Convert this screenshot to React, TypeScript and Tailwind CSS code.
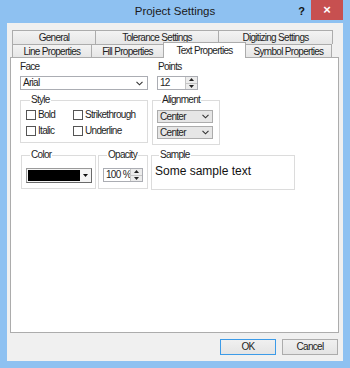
const ui = "font-['Liberation_Sans',Arial,sans-serif] text-[10px] tracking-[-0.7px] text-[#1e1e1e]"

function Chevron() {
  return (
    <svg width="7" height="5" viewBox="0 0 7 5">
      <path d="M0.5 0.8L3.5 3.8L6.5 0.8" stroke="#333" strokeWidth="1.1" fill="none" />
    </svg>
  )
}

function SpinButtons() {
  return (
    <div className="flex w-[12px] shrink-0 flex-col border-l border-[#c5c5c5]">
      <div className="flex flex-1 items-center justify-center border-b border-[#c5c5c5] bg-[#ececec]">
        <svg width="5" height="3" viewBox="0 0 5 3">
          <path d="M0 3L2.5 0L5 3Z" fill="#222" />
        </svg>
      </div>
      <div className="flex flex-1 items-center justify-center bg-[#ececec]">
        <svg width="5" height="3" viewBox="0 0 5 3">
          <path d="M0 0L2.5 3L5 0Z" fill="#222" />
        </svg>
      </div>
    </div>
  )
}

function Group({ label, className, children }: { label: string; className: string; children: React.ReactNode }) {
  return (
    <fieldset className={`border border-[#dcdcdc] ${className}`}>
      <legend className="ml-[4px] px-[1px] leading-[12px]">{label}</legend>
      {children}
    </fieldset>
  )
}

function Check({ label }: { label: string }) {
  return (
    <div className="flex h-[10px] items-center gap-[2px]">
      <div className="h-[10px] w-[10px] border border-[#555] bg-white" />
      <span className="leading-[12px]">{label}</span>
    </div>
  )
}

function Combo({ text }: { text: string }) {
  return (
    <div className="flex h-[13px] w-[56px] items-center justify-between border border-[#acacac] bg-[#e6e6e6] pl-[2px] pr-[3px]">
      <span className="leading-[12px]">{text}</span>
      <Chevron />
    </div>
  )
}

const row1 = [
  { name: "General", w: "w-[84px]" },
  { name: "Tolerance Settings", w: "w-[124px]" },
  { name: "Digitizing Settings", w: "w-[115px]" },
]

const row2 = [
  { name: "Line Properties", w: "w-[80px]", active: false },
  { name: "Fill Properties", w: "w-[73px]", active: false },
  { name: "Text Properties", w: "w-[83px]", active: true },
  { name: "Symbol Properties", w: "w-[87px]", active: false },
]

export default function App() {
  return (
    <div className={`flex h-[368px] w-[350px] flex-col bg-[#8ec1f1] ${ui}`}>
      <div className="grid h-[23px] grid-cols-[1fr_auto_1fr]">
        <div />
        <div className="self-center pt-[1px] text-[11.5px] tracking-normal text-[#1a1a1a]">Project Settings</div>
        <div className="flex items-start justify-end">
          <span className="mr-[6px] mt-[3px] text-[11px] font-bold tracking-normal text-[#111]">?</span>
          <div className="mr-[7px] flex h-[20px] w-[32px] items-center justify-center bg-[#c75050] text-[13px] font-bold tracking-normal text-white">
            ×
          </div>
        </div>
      </div>

      <div className="mx-[7px] mb-[7px] flex flex-1 flex-col bg-[#f0f0f0] pl-[3px] pr-[4px] pt-[7px]">
        <div className="ml-[2px] flex h-[14px]">
          {row1.map((t) => (
            <div
              key={t.name}
              className={`${t.w} -mr-px flex items-center justify-center border border-b-0 border-[#acacac] bg-gradient-to-b from-[#f3f3f3] to-[#e6e6e6] pt-[1px] leading-[12px]`}
            >
              {t.name}
            </div>
          ))}
        </div>
        <div className="ml-[2px] flex h-[13px] items-end">
          {row2.map((t) =>
            t.active ? (
              <div
                key={t.name}
                className={`${t.w} relative z-10 -mb-px -mr-px flex h-[16px] items-center justify-center border border-b-0 border-[#acacac] bg-white leading-[12px]`}
              >
                {t.name}
              </div>
            ) : (
              <div
                key={t.name}
                className={`${t.w} -mr-px flex h-[13px] items-center justify-center border border-b-0 border-[#acacac] bg-gradient-to-b from-[#f3f3f3] to-[#e6e6e6] pt-[2px] leading-[12px]`}
              >
                {t.name}
              </div>
            )
          )}
        </div>

        <div className="flex-1 border border-[#acacac] bg-white pl-[9px] pt-[3px]">
          <div className="flex">
            <div className="w-[128px]">
              <div className="leading-[12px]">Face</div>
              <div className="mt-[3px] flex h-[14px] items-center justify-between border border-[#abadb3] bg-white pl-[2px] pr-[4px]">
                <span className="leading-[12px]">Arial</span>
                <Chevron />
              </div>
            </div>
            <div className="ml-[9px]">
              <div className="pl-[1px] leading-[12px]">Points</div>
              <div className="mt-[3px] flex h-[14px] w-[41px] border border-[#abadb3] bg-white">
                <span className="flex-1 pl-[2px] leading-[12px]">12</span>
                <SpinButtons />
              </div>
            </div>
          </div>

          <div className="mt-[4px] flex items-start">
            <Group label="Style" className="w-[128px] pb-[6px] pl-[5px] pt-[4px]">
              <div className="grid grid-cols-[47px_1fr] gap-y-[6px]">
                <Check label="Bold" />
                <Check label="Strikethrough" />
                <Check label="Italic" />
                <Check label="Underline" />
              </div>
            </Group>
            <Group label="Alignment" className="ml-[4px] w-[68px] pb-[5px] pl-[4px] pt-[4px]">
              <div className="flex flex-col gap-[3px]">
                <Combo text="Center" />
                <Combo text="Center" />
              </div>
            </Group>
          </div>

          <div className="mt-[4px] flex items-start">
            <Group label="Color" className="ml-[1px] w-[75px] pb-[5px] pl-[4px] pt-[7px]">
              <div className="flex h-[15px] w-[66px] items-center border border-[#9a9a9a] border-b-[#6a6a6a] border-r-[#6a6a6a] bg-[#f4f4f4] pl-[1px]">
                <div className="h-[11px] w-[52px] bg-black" />
                <svg className="ml-[3px]" width="5" height="3" viewBox="0 0 5 3">
                  <path d="M0 0L2.5 3L5 0Z" fill="#111" />
                </svg>
              </div>
            </Group>
            <Group label="Opacity" className="ml-[2px] w-[50px] pb-[6px] pl-[4px] pt-[7px]">
              <div className="flex h-[14px] w-[40px] border border-[#abadb3] bg-white">
                <span className="min-w-0 flex-1 whitespace-nowrap pl-[2px] leading-[12px]">100 %</span>
                <SpinButtons />
              </div>
            </Group>
            <Group label="Sample" className="ml-[3px] w-[144px] pb-[10px] pl-[3px] pt-[3px]">
              <div className="text-[12px] leading-[15px] tracking-normal text-[#111]">Some sample text</div>
            </Group>
          </div>
        </div>

        <div className="flex h-[28px] items-center justify-end gap-[6px] pr-[1px]">
          <div className="flex h-[16px] w-[56px] items-center justify-center border border-[#3c9be8] bg-gradient-to-b from-[#f0f0f0] to-[#e4e4e4] leading-[12px]">
            OK
          </div>
          <div className="flex h-[16px] w-[56px] items-center justify-center border border-[#acacac] bg-gradient-to-b from-[#f0f0f0] to-[#e4e4e4] leading-[12px]">
            Cancel
          </div>
        </div>
      </div>
    </div>
  )
}
